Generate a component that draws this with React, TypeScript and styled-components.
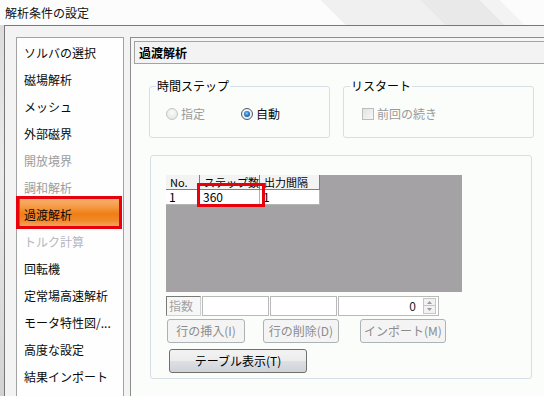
import React from 'react'
import styled, { createGlobalStyle, css } from 'styled-components'

const FONT = `'Noto Sans CJK JP', 'Noto Sans', sans-serif`

const GlobalStyle = createGlobalStyle`
  html, body {
    margin: 0;
    padding: 0;
  }
  body {
    width: 544px;
    height: 396px;
    overflow: hidden;
    font-family: ${FONT};
    font-size: 12px;
    color: #000;
  }
`

const Window = styled.div`
  width: 544px;
  height: 396px;
  display: flex;
  flex-direction: column;
  overflow: hidden;
`
const TitleBar = styled.div`
  height: 25px;
  flex: none;
  display: flex;
  align-items: center;
  padding-left: 5px;
  font-size: 12px;
  line-height: 14px;
  color: #111;
  background: linear-gradient(
    45deg,
    #fbfcfb 0 244px,
    #f0f0f0 244px 315px,
    #e9e9e9 315px 357px,
    #f3f3f3 357px 371px,
    #fbfcfb 371px
  );
`
const Frame = styled.div`
  flex: 1;
  min-height: 0;
  display: flex;
  padding-left: 4px;
  background: linear-gradient(to bottom, #dcdcdc, #ebebeb 40%, #d2d2d2);
`
const Client = styled.div`
  flex: 1;
  min-width: 0;
  display: flex;
  gap: 6px;
  padding: 11px 0 0 11px;
  background: #f3f3f3;
  border-top: 1px solid #787878;
  border-left: 1px solid #787878;
`

type Tone = 'normal' | 'disabled' | 'faint'

const toneColor: Record<Tone, string> = {
  normal: '#0a0a0a',
  disabled: '#9c9c9c',
  faint: '#b6b6c4',
}

const Nav = styled.div`
  width: 108px;
  flex: none;
  box-sizing: border-box;
  padding-top: 1px;
  background: #fdfefd;
  border: 1px solid #a3a3a3;
  border-bottom: none;
`
const NavItem = styled.div<{ $tone: Tone; $active?: boolean }>`
  position: relative;
  height: 27px;
  display: flex;
  align-items: center;
  padding-left: 7px;
  white-space: nowrap;
  line-height: 14px;
  color: ${({ $tone }) => toneColor[$tone]};
  span {
    position: relative;
    z-index: 1;
  }
  ${({ $active }) => $active && css`
    &::before {
      content: '';
      position: absolute;
      left: -1px;
      right: 1px;
      top: -5px;
      bottom: -1px;
      border: 3px solid #e8000c;
      box-shadow: inset 1px 0 0 #9a6a2a;
      background: linear-gradient(
        to bottom,
        #f7b06c 0%,
        #f59a44 30%,
        #f07e14 55%,
        #f08a2c 80%,
        #f6a45c 100%
      );
    }
  `}
`

const Main = styled.div`
  flex: 1;
  min-width: 0;
  display: flex;
  flex-direction: column;
  padding: 3px 0 0 3px;
  background: #f6f6f6;
  border-top: 1px solid #8c8c8c;
  border-left: 1px solid #8c8c8c;
`
const Header = styled.div`
  height: 23px;
  flex: none;
  box-sizing: border-box;
  display: flex;
  align-items: center;
  padding-left: 4px;
  background: #f3f3f3;
  border: 1px solid #a3a3a3;
  border-right: none;
  font-weight: bold;
  line-height: 14px;
`
const Content = styled.div`
  flex: 1;
  margin-left: -3px;
  padding: 15px 0 0 18px;
  background: #fbfdfb;
`
const TopRow = styled.div`
  display: flex;
  gap: 13px;
`
const Group = styled.fieldset<{ $w: number }>`
  width: ${({ $w }) => $w}px;
  height: 59px;
  box-sizing: border-box;
  margin: 0;
  padding: 0 0 0 6px;
  min-width: 0;
  border: 1px solid #d5dfe5;
  border-radius: 3px;
`
const Legend = styled.legend`
  padding: 0 1px;
  font-size: 12px;
  line-height: 14px;
`
const OptionRow = styled.div<{ $indent: number }>`
  display: flex;
  align-items: center;
  height: 16px;
  margin-top: 13px;
  padding-left: ${({ $indent }) => $indent}px;
`
const Option = styled.label<{ $disabled?: boolean; $w?: number }>`
  width: ${({ $w }) => ($w ? `${$w}px` : 'auto')};
  display: flex;
  align-items: center;
  gap: 3px;
  line-height: 14px;
  white-space: nowrap;
  color: ${({ $disabled }) => ($disabled ? '#9a9a9a' : '#0a0a0a')};
`
const Radio = styled.span<{ $checked?: boolean; $disabled?: boolean }>`
  width: 12px;
  height: 12px;
  flex: none;
  box-sizing: border-box;
  border-radius: 50%;
  border: 1px solid ${({ $disabled }) => ($disabled ? '#c4c4c4' : '#4f5a66')};
  background: ${({ $disabled }) =>
    $disabled
      ? 'radial-gradient(circle at 50% 35%, #fafafa, #e2e2e2)'
      : 'radial-gradient(circle at 50% 40%, #ffffff, #dde2e8)'};
  display: flex;
  align-items: center;
  justify-content: center;
  &::after {
    content: '';
    display: ${({ $checked }) => ($checked ? 'block' : 'none')};
    width: 6px;
    height: 6px;
    border-radius: 50%;
    background: radial-gradient(circle at 45% 40%, #8fd0ff 0%, #2a7cc8 45%, #0e3f78 100%);
  }
`
const Check = styled.span`
  width: 12px;
  height: 12px;
  flex: none;
  box-sizing: border-box;
  border: 1px solid #bcbcbc;
  background: linear-gradient(135deg, #e2e2e2, #f8f8f8);
`

const TableGroup = styled.div`
  width: 382px;
  height: 224px;
  box-sizing: border-box;
  margin: 17px 0 0 1px;
  padding: 19px 0 0 15px;
  border: 1px solid #d5dfe5;
  border-radius: 3px;
`
const Grid = styled.div`
  position: relative;
  width: 296px;
  height: 117px;
  background: #a4a2a4;
  font-size: 11px;
`
const GridRow = styled.div`
  display: flex;
`
const HeadCell = styled.div<{ $w: number }>`
  width: ${({ $w }) => $w}px;
  height: 15px;
  box-sizing: border-box;
  padding-left: 4px;
  overflow: hidden;
  white-space: nowrap;
  background: #f3f3f3;
  border-right: 1px solid #7f7f7f;
  border-bottom: 1px solid #7f7f7f;
  line-height: 14px;
`
const Cell = styled.div<{ $w: number }>`
  width: ${({ $w }) => $w}px;
  height: 15px;
  box-sizing: border-box;
  padding-left: 3px;
  background: #fff;
  border-right: 1px solid #b4b4b4;
  border-bottom: 1px solid #b4b4b4;
  line-height: 14px;
  font-size: 12px;
`
const Highlight = styled.div`
  position: absolute;
  left: 31px;
  top: 8px;
  width: 68px;
  height: 24px;
  box-sizing: border-box;
  border: 3px solid #e8000c;
`

const FieldRow = styled.div`
  display: flex;
  margin-top: 4px;
`
const Field = styled.div<{ $w: number; $label?: boolean }>`
  position: relative;
  width: ${({ $w }) => $w}px;
  height: 20px;
  box-sizing: border-box;
  margin-right: 1px;
  display: flex;
  align-items: center;
  justify-content: ${({ $label }) => ($label ? 'flex-start' : 'flex-end')};
  padding: 0 ${({ $label }) => ($label ? '0 0 2px' : '22px 0 0')};
  background: ${({ $label }) => ($label ? '#f7f7f7' : '#fff')};
  border: 1px solid #b9b9b9;
  border-color: ${({ $label }) => ($label ? '#7a7a7a #d0d0d0 #d0d0d0 #7a7a7a' : '#b9b9b9')};
  color: ${({ $label }) => ($label ? '#a2a2a2' : '#222')};
  line-height: 14px;
`
const Spinner = styled.div`
  position: absolute;
  right: 2px;
  top: 1px;
  width: 13px;
  display: flex;
  flex-direction: column;
`
const SpinHalf = styled.div`
  height: 8px;
  box-sizing: border-box;
  display: flex;
  align-items: center;
  justify-content: center;
  background: #f2f2f2;
  border: 1px solid #c6c6c6;
  & + & {
    border-top: none;
  }
`

const ButtonRow = styled.div`
  display: flex;
  margin-top: 3px;
  padding-left: 1px;
`
const Button = styled.button<{ $w: number; $gap?: number }>`
  width: ${({ $w }) => $w}px;
  height: 24px;
  box-sizing: border-box;
  margin: 0 ${({ $gap }) => $gap ?? 0}px 0 0;
  padding: 0;
  font-family: ${FONT};
  font-size: 12px;
  line-height: 14px;
  color: #8c8c8c;
  background: #f4f4f4;
  border: 1px solid #adb2b5;
  border-radius: 3px;
`
const PrimaryButton = styled(Button)`
  display: block;
  margin: 6px 0 0 3px;
  color: #000;
  border-color: #707070;
  background: linear-gradient(
    to bottom,
    #f3f3f3 0%,
    #ececec 48%,
    #dcdfe3 52%,
    #cfd3d8 100%
  );
`

const navItems: { label: string; tone: Tone; active?: boolean }[] = [
  { label: 'ソルバの選択', tone: 'normal' },
  { label: '磁場解析', tone: 'normal' },
  { label: 'メッシュ', tone: 'normal' },
  { label: '外部磁界', tone: 'normal' },
  { label: '開放境界', tone: 'disabled' },
  { label: '調和解析', tone: 'disabled' },
  { label: '過渡解析', tone: 'normal', active: true },
  { label: 'トルク計算', tone: 'faint' },
  { label: '回転機', tone: 'normal' },
  { label: '定常場高速解析', tone: 'normal' },
  { label: 'モータ特性図/...', tone: 'normal' },
  { label: '高度な設定', tone: 'normal' },
  { label: '結果インポート', tone: 'normal' },
]

const Arrow = ({ up }: { up?: boolean }) => (
  <svg width="5" height="3" viewBox="0 0 5 3">
    <polygon points={up ? '0,3 5,3 2.5,0' : '0,0 5,0 2.5,3'} fill="#9a9a9a" />
  </svg>
)

export default function App() {
  return (
    <Window>
      <GlobalStyle />
      <TitleBar>解析条件の設定</TitleBar>
      <Frame>
        <Client>
          <Nav>
            {navItems.map(item => (
              <NavItem key={item.label} $tone={item.tone} $active={item.active}>
                <span>{item.label}</span>
              </NavItem>
            ))}
          </Nav>
          <Main>
            <Header>過渡解析</Header>
            <Content>
              <TopRow>
                <Group $w={181}>
                  <Legend>時間ステップ</Legend>
                  <OptionRow $indent={10}>
                    <Option $disabled $w={75}>
                      <Radio $disabled />
                      指定
                    </Option>
                    <Option $w={75}>
                      <Radio $checked />
                      自動
                    </Option>
                  </OptionRow>
                </Group>
                <Group $w={191}>
                  <Legend>リスタート</Legend>
                  <OptionRow $indent={12}>
                    <Option $disabled>
                      <Check />
                      前回の続き
                    </Option>
                  </OptionRow>
                </Group>
              </TopRow>
              <TableGroup>
                <Grid>
                  <GridRow>
                    <HeadCell $w={34}>No.</HeadCell>
                    <HeadCell $w={60}>ステップ数</HeadCell>
                    <HeadCell $w={60}>出力間隔</HeadCell>
                  </GridRow>
                  <GridRow>
                    <Cell $w={34}>1</Cell>
                    <Cell $w={60}>360</Cell>
                    <Cell $w={60}>1</Cell>
                  </GridRow>
                  <Highlight />
                </Grid>
                <FieldRow>
                  <Field $w={35} $label>指数</Field>
                  <Field $w={67} />
                  <Field $w={67} />
                  <Field $w={101}>
                    0
                    <Spinner>
                      <SpinHalf><Arrow up /></SpinHalf>
                      <SpinHalf><Arrow /></SpinHalf>
                    </Spinner>
                  </Field>
                </FieldRow>
                <ButtonRow>
                  <Button $w={78} $gap={18}>行の挿入(I)</Button>
                  <Button $w={76} $gap={21}>行の削除(D)</Button>
                  <Button $w={86}>インポート(M)</Button>
                </ButtonRow>
                <PrimaryButton $w={138}>テーブル表示(T)</PrimaryButton>
              </TableGroup>
            </Content>
          </Main>
        </Client>
      </Frame>
    </Window>
  )
}
